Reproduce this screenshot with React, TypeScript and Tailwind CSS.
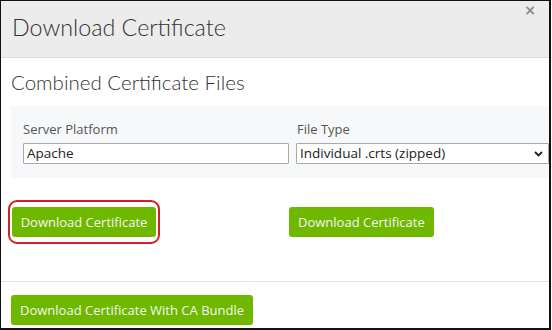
import React from "react";

export default function App() {
  const btn =
    "h-[30px] rounded-[3px] bg-[#6eb800] px-[9px] text-[13px] text-[#f4f4f4] font-['Open_Sans',sans-serif] leading-none flex items-center";
  return (
    <div className="w-[552px] h-[330px] bg-white overflow-hidden">
      <div className="w-[551px] h-[330px] border-t border-l border-r-2 border-b-2 border-[#111] flex flex-col relative bg-white">
        {/* Header */}
        <div className="h-[57px] bg-[#ececec] border-b border-[#dddddd] flex items-center pl-[11px] shrink-0">
          <span className="text-[23.3px] text-[#333] font-['Lato',sans-serif] font-light leading-none mt-[-2px]">
            Download Certificate
          </span>
        </div>
        <button className="absolute right-[13px] top-[2px] text-[#8a8a8a] text-[14px] leading-none font-['DejaVu_Sans',sans-serif] font-bold">
          ×
        </button>
        {/* Body */}
        <div className="pl-[10px] pt-[12px] flex flex-col">
          <div className="text-[20.5px] text-[#333] font-['Lato',sans-serif] font-light leading-[24px] h-[36px]">
            Combined Certificate Files
          </div>
          <div className="bg-[#f7f8fa] h-[72px] flex pl-[12px] pt-[14px] gap-[7px]">
            <div className="flex flex-col w-[266px]">
              <label className="text-[13px] text-[#555] font-['Open_Sans',sans-serif] leading-[18px] h-[23px]">
                Server Platform
              </label>
              <div className="h-[21px] border border-[#a9a9a9] bg-white text-[13.5px] text-[#222] font-['Open_Sans',sans-serif] leading-[19px] px-[3px] rounded-[1px]">
                Apache
              </div>
            </div>
            <div className="flex flex-col flex-1">
              <label className="text-[13px] text-[#555] font-['Open_Sans',sans-serif] leading-[18px] h-[23px] pl-[1px]">
                File Type
              </label>
              <div className="h-[21px] border border-[#a9a9a9] bg-white text-[13.5px] text-[#222] font-['Open_Sans',sans-serif] leading-[19px] px-[3px] rounded-[1px] flex items-center justify-between">
                <span>Individual .crts (zipped)</span>
                <svg width="9" height="6" viewBox="0 0 9 6" className="mr-[2px]">
                  <path d="M1 1 L4.5 4.5 L8 1" stroke="#222" strokeWidth="1.8" fill="none" />
                </svg>
              </div>
            </div>
          </div>
          {/* Buttons row */}
          <div className="flex h-[104px] pt-[22px] border-b border-[#e2e2e2] -ml-[10px] pl-[7px]">
            <div className="w-[152px] h-[44px] rounded-[9px] border-2 border-[#d42020] flex items-center justify-center">
              <button className={btn}>Download Certificate</button>
            </div>
            <div className="ml-[129px] pt-[7px]">
              <button className={btn}>Download Certificate</button>
            </div>
          </div>
          <div className="pt-[13px]">
            <button className={btn}>Download Certificate With CA Bundle</button>
          </div>
        </div>
      </div>
    </div>
  );
}
